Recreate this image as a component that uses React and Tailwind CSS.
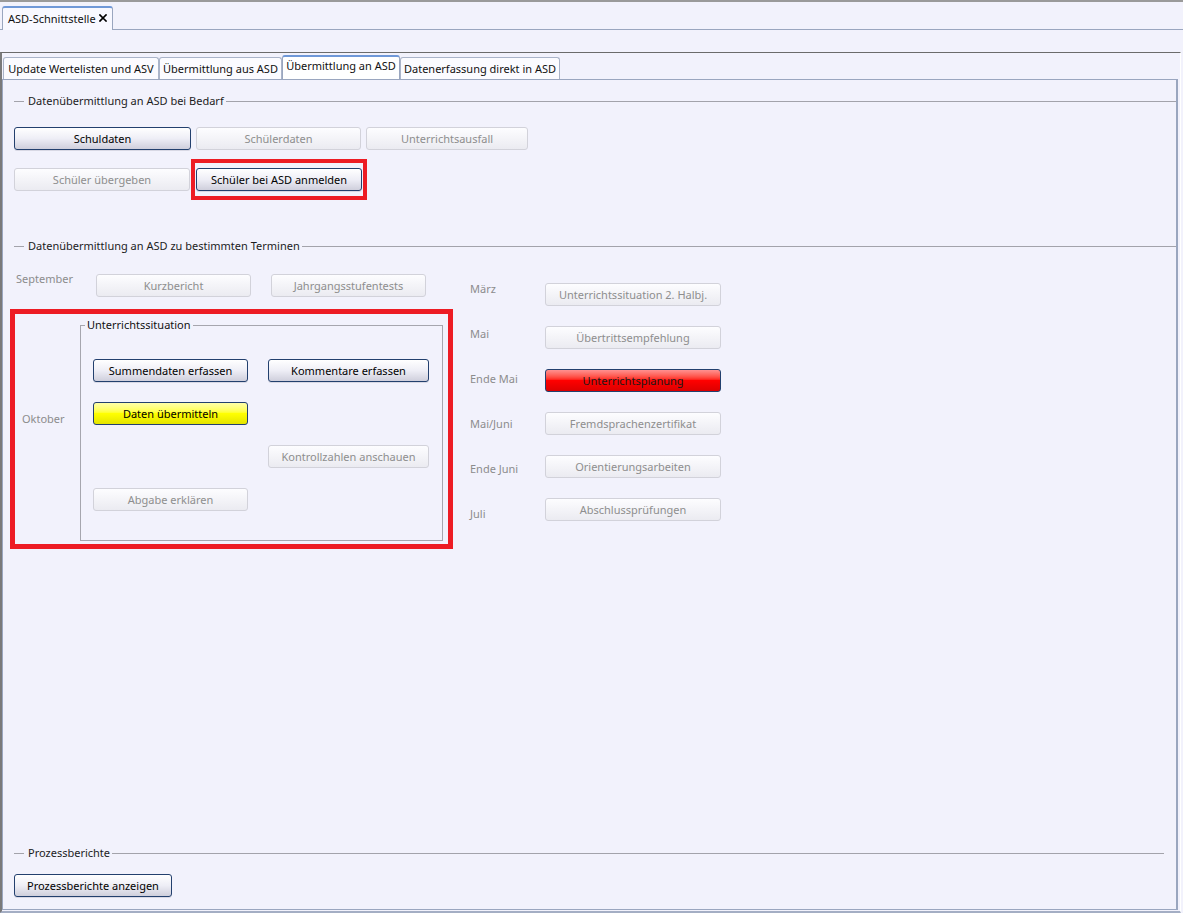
import React from 'react'

// Button looks taken from the Swing look & feel in the screenshot
const BTN_BASE = 'flex items-center justify-center h-[23px] rounded-[3px] border leading-none whitespace-nowrap'
const BTN_STYLES = {
  enabled: 'border-[#23406e] bg-linear-to-b from-white via-[#eeeef6] to-[#cfcfdc] text-black shadow-[0_1px_0_#d8d8e4]',
  disabled: 'border-[#d2d2da] bg-linear-to-b from-[#fdfdff] to-[#ebebf1] text-[#8e8e8e]',
  yellow: 'border-[#23406e] bg-linear-to-b from-[#ffffa8] via-[#ffff00] to-[#e4e400] text-black',
  red: 'border-[#23406e] bg-linear-to-b from-[#ff9090] via-[#ff0000] to-[#dc0000] text-[#1a1a1a]',
}

function Btn({ children, w, variant = 'enabled' }) {
  return <div className={`${BTN_BASE} ${BTN_STYLES[variant]} ${w}`}>{children}</div>
}

function SectionTitle({ children, className = '' }) {
  return (
    <div className={`flex items-center h-[16px] ml-[4px] ${className}`}>
      <div className="w-[10px] h-px bg-[#a3a3ab]" />
      <span className="ml-[4px] mr-[2px] text-[#1c1c1c]">{children}</span>
      <div className="flex-1 h-px bg-[#a3a3ab]" />
    </div>
  )
}

function CloseIcon() {
  return (
    <svg width="8" height="8" viewBox="0 0 8 8" className="ml-[3px] mt-[-3px]">
      <path d="M1 1 L7 7 M7 1 L1 7" stroke="#000" strokeWidth="1.7" strokeLinecap="square" />
    </svg>
  )
}

const rightRows = [
  { label: 'März', text: 'Unterrichtssituation 2. Halbj.', variant: 'disabled' },
  { label: 'Mai', text: 'Übertrittsempfehlung', variant: 'disabled' },
  { label: 'Ende Mai', text: 'Unterrichtsplanung', variant: 'red' },
  { label: 'Mai/Juni', text: 'Fremdsprachenzertifikat', variant: 'disabled' },
  { label: 'Ende Juni', text: 'Orientierungsarbeiten', variant: 'disabled' },
  { label: 'Juli', text: 'Abschlussprüfungen', variant: 'disabled' },
]

const tabs = [
  { text: 'Update Wertelisten und ASV', w: 'w-[156px]' },
  { text: 'Übermittlung aus ASD', w: 'w-[123px]' },
  { text: 'Übermittlung an ASD', w: 'w-[118px]', active: true },
  { text: 'Datenerfassung direkt in ASD', w: 'w-[160px]' },
]

export default function App() {
  return (
    <div className="w-[1183px] h-[913px] overflow-hidden bg-[#f2f2fc] font-['Noto_Sans',sans-serif] text-[11px] leading-[16px] text-[#1c1c1c]">
      {/* top strip */}
      <div className="h-[2px] bg-[#9a9a9a]" />
      <div className="h-[28px] border-b border-[#9aa6bf] pl-[2px] pt-[4px]">
        <div className="h-[24px] w-[111px] flex items-center pl-[5px] bg-[#f8f8ff] border border-b-0 border-[#9aa6bf] border-t-2 border-t-[#6f98d8] rounded-t-[3px]">
          <span className="text-[#111]">ASD-Schnittstelle</span>
          <CloseIcon />
        </div>
      </div>

      {/* outer panel */}
      <div className="mt-[22px] h-[861px] w-[1181px] border-t border-[#6b6b6b] border-l-2 border-l-[#7a7a7a] border-r border-r-white border-b-2 border-b-[#a4aec4] pt-[2px]">
        {/* inner tabs */}
        <div className="flex items-end h-[24px] ml-[1px]">
          {tabs.map((t) => (
            <div
              key={t.text}
              className={`${t.w} flex items-center justify-center rounded-t-[3px] border border-b-0 ${
                t.active
                  ? 'h-[24px] bg-white border-[#9aa6bf] border-t-2 border-t-[#6f98d8] pb-[4px]'
                  : 'h-[22px] bg-[#fbfbff] border-[#aab4c9]'
              }`}
            >
              <span className="text-[#111] whitespace-nowrap">{t.text}</span>
            </div>
          ))}
        </div>

        {/* tab content */}
        <div className="flex flex-col h-[831px] w-[1176px] border border-[#9aa6bf] border-r-2 pl-[7px] pt-[13px] pb-[12px]">
          {/* bei Bedarf */}
          <SectionTitle>Datenübermittlung an ASD bei Bedarf</SectionTitle>
          <div className="flex ml-[4px] mt-[18px] gap-[5px]">
            <Btn w="w-[177px]">Schuldaten</Btn>
            <Btn w="w-[165px]" variant="disabled">Schülerdaten</Btn>
            <Btn w="w-[162px]" variant="disabled">Unterrichtsausfall</Btn>
          </div>
          <div className="flex items-center ml-[4px] mt-[9px]">
            <Btn w="w-[176px]" variant="disabled">Schüler übergeben</Btn>
            <div className="ml-[1px] border-4 border-[#ed1c24] px-[1px] py-[5px]">
              <Btn w="w-[166px]">Schüler bei ASD anmelden</Btn>
            </div>
          </div>

          {/* zu bestimmten Terminen */}
          <SectionTitle className="mt-[38px]">Datenübermittlung an ASD zu bestimmten Terminen</SectionTitle>
          <div className="flex mt-[17px]">
            {/* left column */}
            <div className="w-[443px] flex flex-col">
              <div className="flex items-start">
                <div className="w-[86px] pl-[6px] text-[#8c8c8c]">September</div>
                <div className="flex gap-[20px] mt-[3px]">
                  <Btn w="w-[155px]" variant="disabled">Kurzbericht</Btn>
                  <Btn w="w-[155px]" variant="disabled">Jahrgangsstufentests</Btn>
                </div>
              </div>
              <div className="mt-[12px] h-[240px] border-[5px] border-[#ed1c24] flex pt-[3px]">
                <div className="w-[65px] pl-[7px] mt-[94px] text-[#8c8c8c]">Oktober</div>
                <fieldset className="w-[363px] h-[224px] border border-[#a6a6ae] pt-[26px]">
                  <legend className="ml-[4px] px-[2px] text-[#111]">Unterrichtssituation</legend>
                  <div className="ml-[12px] grid grid-cols-[155px_161px] gap-x-[20px] gap-y-[20px]">
                    <Btn w="w-[155px]">Summendaten erfassen</Btn>
                    <Btn w="w-[161px]">Kommentare erfassen</Btn>
                    <Btn w="w-[155px]" variant="yellow">Daten übermitteln</Btn>
                    <div />
                    <div />
                    <Btn w="w-[161px]" variant="disabled">Kontrollzahlen anschauen</Btn>
                    <Btn w="w-[155px]" variant="disabled">Abgabe erklären</Btn>
                  </div>
                </fieldset>
              </div>
            </div>

            {/* right column */}
            <div className="flex ml-[17px]">
              <div className="w-[75px] mt-[10px] flex flex-col">
                {rightRows.map((r) => (
                  <div key={r.label} className="h-[45px] text-[#8c8c8c]">{r.label}</div>
                ))}
              </div>
              <div className="mt-[12px] flex flex-col gap-[20px]">
                {rightRows.map((r) => (
                  <Btn key={r.text} w="w-[176px]" variant={r.variant}>{r.text}</Btn>
                ))}
              </div>
            </div>
          </div>

          {/* Prozessberichte */}
          <div className="mt-auto pr-[12px]">
            <SectionTitle>Prozessberichte</SectionTitle>
            <div className="ml-[4px] mt-[13px]">
              <Btn w="w-[158px]">Prozessberichte anzeigen</Btn>
            </div>
          </div>
        </div>
      </div>
    </div>
  )
}
